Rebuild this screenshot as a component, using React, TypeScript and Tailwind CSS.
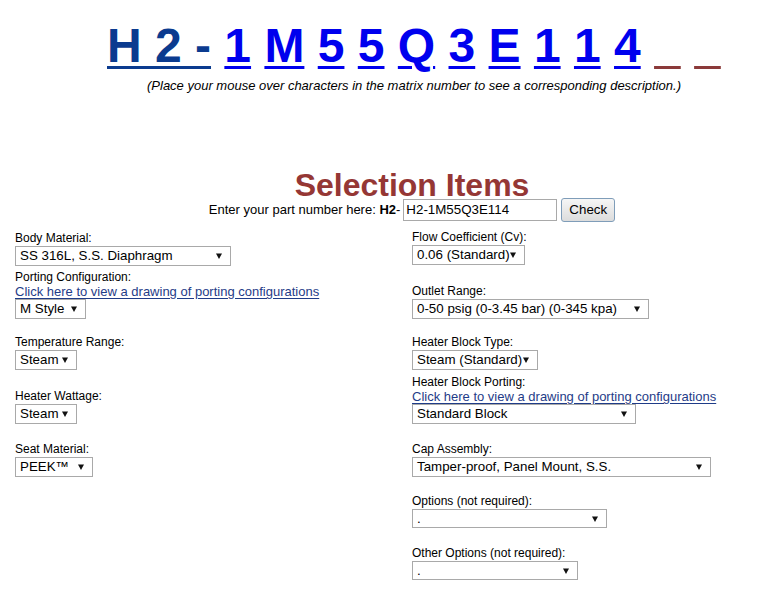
import React from "react";

const matrix = [
  { ch: "1" },
  { ch: "M" },
  { ch: "5" },
  { ch: "5" },
  { ch: "Q" },
  { ch: "3" },
  { ch: "E" },
  { ch: "1" },
  { ch: "1" },
  { ch: "4" },
];

function Arrow() {
  return (
    <svg width="6" height="6" viewBox="0 0 6 6" className="shrink-0">
      <path d="M0 0.5 H6 L3 6 Z" fill="#111" />
    </svg>
  );
}

function Select({ value, width, small }: { value: string; width: number; small?: boolean }) {
  return (
    <div
      className={`flex items-center justify-between border border-[#a9a9a9] bg-white pl-[4px] pr-[8px] text-[13.33px] text-black ${
        small ? "h-[19px]" : "h-[20px]"
      }`}
      style={{ width }}
    >
      <span className="whitespace-nowrap leading-none">{value}</span>
      <Arrow />
    </div>
  );
}

function Label({ children }: { children: React.ReactNode }) {
  return <div className="text-[12px] leading-[16px] text-black">{children}</div>;
}

function PortLink() {
  return (
    <a className="block text-[13px] leading-[14px] text-[#1f3c88] underline underline-offset-2 cursor-pointer">
      Click here to view a drawing of porting configurations
    </a>
  );
}

export default function App() {
  return (
    <div className="min-h-[590px] w-[760px] bg-white font-['Liberation_Sans',Arial,sans-serif] text-black">
      <div className="ml-[107px] w-[614px] pt-[18px]">
        <div className="whitespace-pre text-[48px] font-bold leading-[56px]">
          <a className="text-[#0b3b8f] underline decoration-[3px] underline-offset-[4px] cursor-pointer">H 2 -</a>
          {matrix.map((m, i) => (
            <React.Fragment key={i}>
              {" "}
              <a className="text-[#0000ee] underline decoration-[3px] underline-offset-[4px] cursor-pointer">{m.ch}</a>
            </React.Fragment>
          ))}
          {" "}
          <span className="text-transparent underline decoration-[#8b3a3a] decoration-[3px] underline-offset-[4px]">_</span>{" "}
          <span className="text-transparent underline decoration-[#8b3a3a] decoration-[3px] underline-offset-[4px]">_</span>
        </div>
        <p className="mt-[4px] text-center text-[13px] italic leading-[16px]">
          (Place your mouse over characters in the matrix number to see a corresponding description.)
        </p>
      </div>

      <div className="ml-[107px] mt-[78px] w-[610px] text-center">
        <h1 className="text-[32px] font-bold leading-[27px] text-[#953735]">Selection Items</h1>
        <div className="-mt-[1px] flex items-center justify-center gap-[3px] text-[13px]">
          <span>
            Enter your part number here: <b>H2</b>-
          </span>
          <div className="flex h-[22px] w-[154px] items-center border border-[#a9a9a9] px-[2px] text-left text-[13.33px]">
            H2-1M55Q3E114
          </div>
          <button className="ml-[1px] h-[24px] rounded-[3px] border border-[#7f9db9] bg-gradient-to-b from-[#f6f6f6] to-[#dcdcdc] px-[7px] text-[13.33px]">
            Check
          </button>
        </div>
      </div>

      <div className="mt-[8px] grid grid-cols-[397px_1fr] grid-rows-[35px_54px_51px_54px_53px_51px_52px] items-end pl-[15px]">
        <div className="row-span-2 self-end">
          <Label>Body Material:</Label>
          <Select value="SS 316L, S.S. Diaphragm" width={216} />
          <div className="mt-[3px]">
            <Label>Porting Configuration:</Label>
            <PortLink />
            <Select value="M Style" width={71} />
          </div>
        </div>
        <div>
          <Label>Flow Coefficient (Cv):</Label>
          <Select value="0.06 (Standard)" width={113} />
        </div>
        <div className="col-start-2">
          <Label>Outlet Range:</Label>
          <Select value="0-50 psig (0-3.45 bar) (0-345 kpa)" width={237} />
        </div>

        <div>
          <Label>Temperature Range:</Label>
          <Select value="Steam" width={62} />
        </div>
        <div>
          <Label>Heater Block Type:</Label>
          <Select value="Steam (Standard)" width={126} />
        </div>

        <div>
          <Label>Heater Wattage:</Label>
          <Select value="Steam" width={62} />
        </div>
        <div>
          <Label>Heater Block Porting:</Label>
          <PortLink />
          <Select value="Standard Block" width={224} />
        </div>

        <div>
          <Label>Seat Material:</Label>
          <Select value="PEEK™" width={78} />
        </div>
        <div>
          <Label>Cap Assembly:</Label>
          <Select value="Tamper-proof, Panel Mount, S.S." width={299} />
        </div>

        <div className="col-start-2">
          <Label>Options (not required):</Label>
          <Select value="." width={195} small />
        </div>
        <div className="col-start-2">
          <Label>Other Options (not required):</Label>
          <Select value="." width={166} small />
        </div>
      </div>
    </div>
  );
}
